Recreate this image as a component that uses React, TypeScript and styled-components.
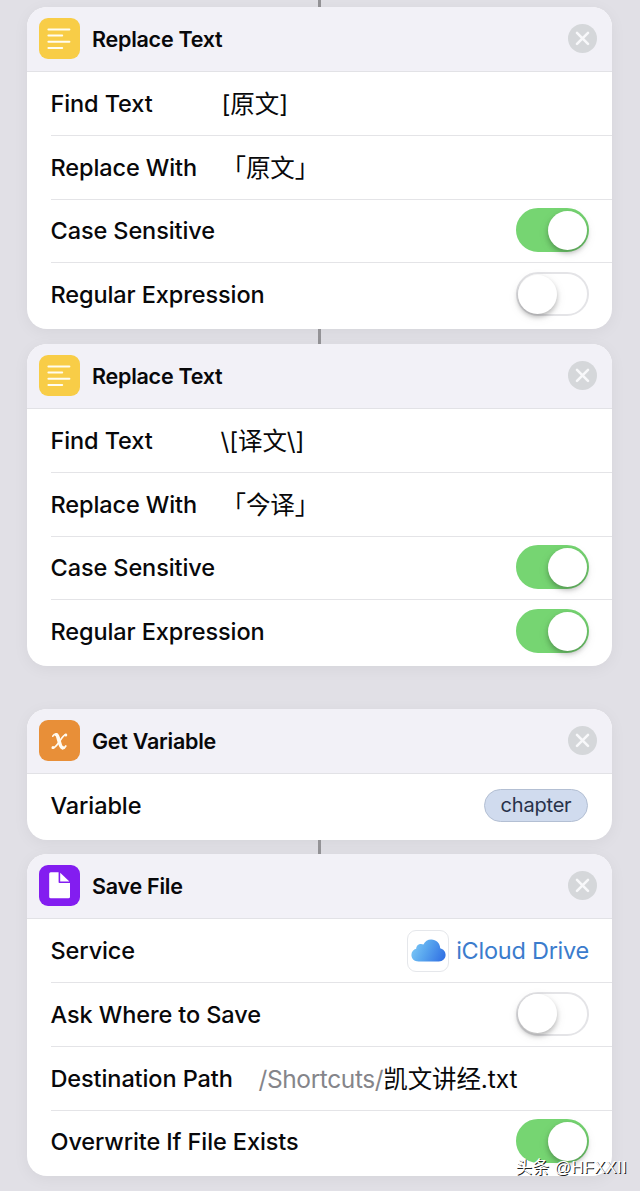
import { FunctionComponent, ReactNode } from 'react';
import styled, { createGlobalStyle } from 'styled-components';

interface ActionCardProps {
  icon: ReactNode;
  title: string;
  children: ReactNode;
}

interface SwitchRowProps {
  label: string;
  on?: boolean;
}

const TextIcon: FunctionComponent = () => (
  <Tile $color="#f8cd47">
    <svg width="41" height="41" viewBox="0 0 41 41" stroke="#fffdf0" strokeWidth="2" strokeLinecap="round">
      <path d="M9.4 11.5H30.4M9.4 17.6H23.2M9.4 23.8H30.4M9.4 30H23.2" />
    </svg>
  </Tile>
);

const VariableIcon: FunctionComponent = () => (
  <Tile $color="#e88f38">
    <svg width="41" height="41" viewBox="0 0 41 41" fill="none" stroke="#fffaf0" strokeLinecap="round">
      <path strokeWidth="3.6" d="M17.6 14.8C19.6 15.4 20.4 27.2 23.4 27.6" />
      <path strokeWidth="1.7" d="M13.8 16.2C14.8 14.4 15.8 13.8 17.2 13.8M23.6 28.6C25 28.6 26 27.6 26.8 26" />
      <path strokeWidth="1.7" d="M27 14.6C23.2 13.6 18.4 28.6 13.6 28" />
      <path strokeWidth="3" d="M26.8 15.1V15.1M14 27.6V27.6" />
    </svg>
  </Tile>
);

const FileIcon: FunctionComponent = () => (
  <Tile $color="#831df0">
    <svg width="41" height="41" viewBox="0 0 41 41" fill="#fff">
      <path d="M11.7 7.2H19.6V17.2Q19.6 18 20.4 18H31V31.8Q31 33.3 29.5 33.3H11.7Q10.2 33.3 10.2 31.8V8.7Q10.2 7.2 11.7 7.2Z" />
      <path d="M21.2 7.8L30.4 16.5H21.2Z" />
    </svg>
  </Tile>
);

const CloudIcon: FunctionComponent = () => (
  <CloudTile>
    <svg width="35" height="23" viewBox="0 0 35 23">
      <defs>
        <linearGradient id="cloud" x1="0" y1="0.3" x2="1" y2="0.6">
          <stop offset="0" stopColor="#7cc8f6" />
          <stop offset="0.45" stopColor="#58a5ee" />
          <stop offset="1" stopColor="#3474e4" />
        </linearGradient>
      </defs>
      <path
        fill="url(#cloud)"
        d="M7.5 22.5C3.4 22.5.4 19.7.4 16C.4 12.8 2.4 10.4 5.2 9.8C5.2 6.9 7.4 4.9 10 4.9C10.9 4.9 11.7 5.1 12.4 5.5C13.9 2.3 16.7.4 20.2.4C25.2.4 29.1 4.1 29.2 9.2C32.4 10 34.6 12.6 34.6 15.8C34.6 19.6 31.7 22.5 27.8 22.5Z"
      />
    </svg>
  </CloudTile>
);

const ActionCard: FunctionComponent<ActionCardProps> = ({ icon, title, children }) => {
  return (
    <Card>
      <CardHeader>
        {icon}
        <Title>{title}</Title>
        <CloseButton aria-label="Remove">
          <svg width="29" height="29" viewBox="0 0 29 29" stroke="#f8f8fa" strokeWidth="2.6" strokeLinecap="round">
            <path d="M9 8.8L20 19.8M20 8.8L9 19.8" />
          </svg>
        </CloseButton>
      </CardHeader>
      <Rows>{children}</Rows>
    </Card>
  );
};

const SwitchRow: FunctionComponent<SwitchRowProps> = ({ label, on }) => (
  <Row>
    <Label>{label}</Label>
    <Switch $on={on} role="switch" aria-checked={!!on}>
      <Knob />
    </Switch>
  </Row>
);

export default function App() {
  return (
    <>
      <GlobalStyle />
      <Page>
        <Connector $height={7} $line />
        <ActionCard icon={<TextIcon />} title="Replace Text">
          <Row>
            <Label $width={171}>Find Text</Label>
            <Value>[原文]</Value>
          </Row>
          <Row>
            <Label $width={171}>Replace With</Label>
            <Value>「原文」</Value>
          </Row>
          <SwitchRow label="Case Sensitive" on />
          <SwitchRow label="Regular Expression" />
        </ActionCard>
        <Connector $height={15} $line />
        <ActionCard icon={<TextIcon />} title="Replace Text">
          <Row>
            <Label $width={170}>Find Text</Label>
            <Value>\[译文\]</Value>
          </Row>
          <Row>
            <Label $width={171}>Replace With</Label>
            <Value>「今译」</Value>
          </Row>
          <SwitchRow label="Case Sensitive" on />
          <SwitchRow label="Regular Expression" on />
        </ActionCard>
        <Connector $height={43} />
        <ActionCard icon={<VariableIcon />} title="Get Variable">
          <Row>
            <Label>Variable</Label>
            <Token>chapter</Token>
          </Row>
        </ActionCard>
        <Connector $height={14.6} $line />
        <ActionCard icon={<FileIcon />} title="Save File">
          <Row>
            <Label>Service</Label>
            <Service>
              <CloudIcon />
              iCloud Drive
            </Service>
          </Row>
          <SwitchRow label="Ask Where to Save" />
          <Row>
            <Label $width={208}>Destination Path</Label>
            <Value>
              <Muted>/Shortcuts/</Muted>凯文讲经.txt
            </Value>
          </Row>
          <SwitchRow label="Overwrite If File Exists" on />
        </ActionCard>
        <Watermark>头条 @HFXXII</Watermark>
      </Page>
    </>
  );
}

const GlobalStyle = createGlobalStyle`
  body {
    margin: 0;
    background-color: #e0dfe5;
  }
`;
const Page = styled.main`
  position: relative;
  box-sizing: border-box;
  width: 640px;
  height: 1191px;
  padding: 0 28px 0 27px;
  overflow: hidden;
  background-color: #e1e0e6;
  font-family: Inter, 'Noto Sans CJK SC', sans-serif;
  color: #08080a;
`;
const Connector = styled.div<{ $height: number; $line?: boolean }>`
  width: 3px;
  height: ${({ $height }) => $height}px;
  margin-left: 291px;
  background-color: ${({ $line }) => ($line ? '#949397' : 'transparent')};
`;
const Card = styled.section`
  border-radius: 20px;
  background-color: #fff;
  box-shadow: 0 3px 16px rgba(0, 0, 0, 0.05);
`;
const CardHeader = styled.header`
  box-sizing: border-box;
  display: flex;
  align-items: center;
  height: 65px;
  padding: 0 15px 0 12px;
  border-bottom: 1px solid #e2e2e6;
  border-radius: 20px 20px 0 0;
  background-color: #f2f1f7;
`;
const Tile = styled.div<{ $color: string }>`
  width: 41px;
  height: 41px;
  margin-top: -0.8px;
  border-radius: 9px;
  background-color: ${({ $color }) => $color};
`;
const Title = styled.h2`
  flex: 1;
  margin: 0 0 0 12px;
  font-size: 21.5px;
  font-weight: 600;
  letter-spacing: -0.25px;
`;
const CloseButton = styled.button`
  width: 29px;
  height: 29px;
  margin-top: -0.8px;
  padding: 0;
  border: 0;
  border-radius: 50%;
  background-color: #d5d7da;
`;
const Rows = styled.div`
  padding: 0 0 2px 24px;
`;
const Row = styled.div`
  box-sizing: border-box;
  display: flex;
  align-items: center;
  height: 63.75px;
  padding-right: 23px;
  border-bottom: 1px solid #e4e4e7;

  &:last-child {
    border-bottom-color: transparent;
  }
`;
const Label = styled.span<{ $width?: number }>`
  flex: none;
  width: ${({ $width }) => ($width ? `${$width}px` : 'auto')};
  margin-right: auto;
  margin-left: -0.5px;
  font-size: 23.5px;
  font-weight: 500;
  letter-spacing: -0.1px;
  white-space: nowrap;
`;
const Value = styled.span`
  flex: 1;
  padding-bottom: 2px;
  font-size: 24.5px;
  font-weight: 390;
  letter-spacing: -0.1px;
  white-space: nowrap;
`;
const Muted = styled.span`
  letter-spacing: -0.4px;
  color: #85858a;
`;
const Switch = styled.div<{ $on?: boolean }>`
  box-sizing: border-box;
  display: flex;
  justify-content: ${({ $on }) => ($on ? 'flex-end' : 'flex-start')};
  width: 73px;
  height: 44px;
  margin-top: -1px;
  padding: 1px 0;
  border: 2px solid ${({ $on }) => ($on ? '#76d572' : '#e4e4e7')};
  border-radius: 22px;
  background-color: ${({ $on }) => ($on ? '#76d572' : '#fff')};
`;
const Knob = styled.div`
  width: 39px;
  height: 39px;
  margin-top: -0.5px;
  border-radius: 50%;
  background-color: #fff;
  box-shadow: 0 3px 5px rgba(0, 0, 0, 0.24), 0 3px 12px rgba(0, 0, 0, 0.08);
`;
const Token = styled.span`
  box-sizing: border-box;
  width: 104px;
  height: 33px;
  margin: 0 1px 0 0;
  border: 1px solid #b3bfd3;
  border-radius: 17px;
  background-color: #d0dbee;
  font-size: 20px;
  line-height: 31px;
  letter-spacing: -0.2px;
  text-align: center;
  color: #28324a;
`;
const Service = styled.div`
  display: flex;
  align-items: center;
  gap: 7px;
  font-size: 23.5px;
  letter-spacing: -0.25px;
  color: #3b7ccd;
`;
const CloudTile = styled.div`
  box-sizing: border-box;
  display: flex;
  align-items: center;
  justify-content: center;
  width: 42px;
  height: 42px;
  border: 1px solid #e5e7eb;
  border-radius: 9px;
`;
/* Sits over the last card and the page edge */
const Watermark = styled.div`
  position: absolute;
  right: 13px;
  bottom: 13px;
  font-family: 'Liberation Sans', 'Noto Sans CJK SC', sans-serif;
  font-size: 16.5px;
  line-height: 22px;
  letter-spacing: 0.4px;
  white-space: nowrap;
  color: #fff;
  text-shadow: 1px 1px 0 #222;
`;
